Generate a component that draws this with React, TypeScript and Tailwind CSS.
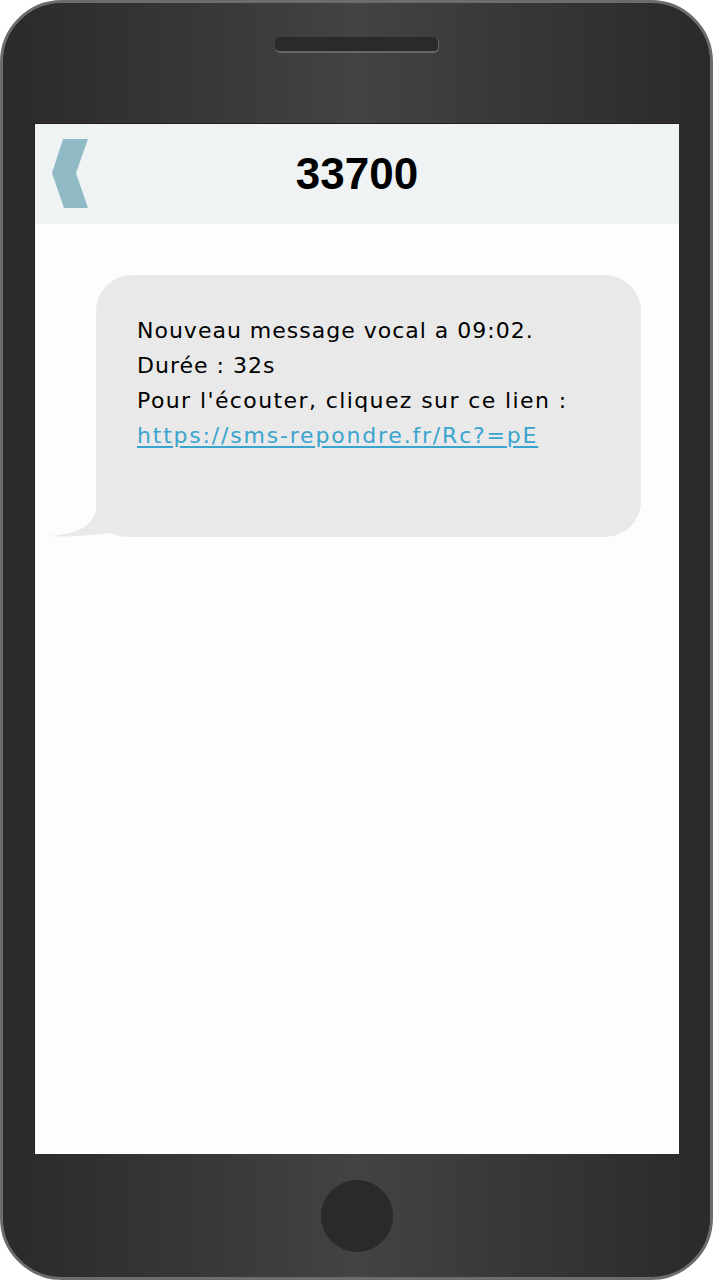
import React from "react";

const comic = { fontFamily: '"Comic Sans MS", "DejaVu Sans", sans-serif' };

function BackChevron() {
  return (
    <svg width="36" height="70" viewBox="0 0 36 70" className="shrink-0">
      <polygon points="11,0 36,0 24,34 36,69 12,69 0,34" fill="#8fbac6" />
    </svg>
  );
}

function Bubble() {
  return (
    <div className="relative ml-[61px] mt-[51px] w-[545px]">
      {/* tail */}
      <svg
        width="86"
        height="42"
        viewBox="0 0 86 42"
        className="absolute left-[-49px] bottom-0"
      >
        <path
          d="M49 0 L49 14 C47 30 30 40 0 41 C20 42 40 41 62 38 C70 41 78 42 86 42 L86 0 Z"
          fill="#e9e9e9"
        />
      </svg>
      <div
        className="relative rounded-[36px] bg-[#e9e9e9] h-[262px] pl-[41px] pt-[38px] text-[22px] leading-[35px] tracking-[1px] text-black"
        style={comic}
      >
        <p>Nouveau message vocal a 09:02.</p>
        <p>Durée : 32s</p>
        <p className="tracking-[1.4px]">Pour l'écouter, cliquez sur ce lien :</p>
        <p>
          <a className="text-[#3aa4cf] underline underline-offset-[3px] tracking-[1.8px]">
            https://sms-repondre.fr/Rc?=pE
          </a>
        </p>
      </div>
    </div>
  );
}

export default function App() {
  return (
    <div className="w-[713px] h-[1280px] rounded-[62px] border-[3px] border-[#6c6c6c] bg-linear-to-r from-[#2b2a28] via-[#434343] to-[#2b2a28] flex flex-col items-center overflow-hidden">
      {/* speaker */}
      <div className="mt-[34px] w-[164px] h-[16px] rounded-[5px] bg-[#2b2a28] border-b-[2px] border-r border-[#666]" />

      {/* screen */}
      <div className="mt-[70px] w-[645px] h-[1031px] bg-[#fdfdfd] border-t border-l border-[#1e1e1e] flex flex-col">
        <div className="h-[100px] bg-[#eff3f4] flex items-center relative px-[17px]">
          <BackChevron />
          <div className="absolute inset-0 flex items-center justify-center text-[44px] font-bold text-black font-['Liberation_Sans',sans-serif]">
            33700
          </div>
        </div>
        <Bubble />
      </div>

      {/* home button */}
      <div className="flex-1 flex items-center justify-center">
        <div className="w-[72px] h-[72px] rounded-full bg-[#2b2a28]" />
      </div>
    </div>
  );
}
